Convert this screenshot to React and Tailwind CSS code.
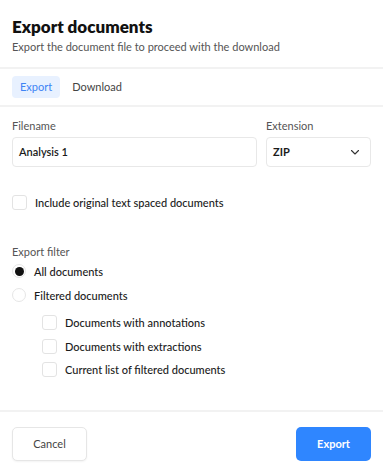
import React from 'react';

const font = { fontFamily: 'Lato, "Open Sans", sans-serif' };

const Box = () => (
  <span className="w-[15px] h-[15px] rounded-[3px] border border-[#e3e3e3] bg-white shrink-0" />
);

const Check = ({ label, className = '' }) => (
  <label className={`flex items-center gap-[8px] h-[15px] ${className}`}>
    <Box />
    <span className="text-[11px] leading-[15px] text-[#1b1b1b] font-medium">{label}</span>
  </label>
);

const Radio = ({ label, checked }) => (
  <label className="flex items-center gap-[8px] h-[24px]">
    <span className="w-[14px] h-[14px] rounded-full border border-[#e6e6e6] bg-white flex items-center justify-center shrink-0">
      {checked && <span className="w-[9px] h-[9px] rounded-full bg-[#111]" />}
    </span>
    <span className="text-[11px] leading-[15px] text-[#1b1b1b] font-medium">{label}</span>
  </label>
);

export default function App() {
  return (
    <div style={font} className="w-[383px] h-[473px] bg-white flex flex-col overflow-hidden">
      {/* header */}
      <div className="px-[12px] pt-[16px] h-[67px]">
        <h1 className="text-[17px] leading-[22px] font-extrabold text-[#111]">Export documents</h1>
        <p className="text-[11px] leading-[14px] mt-[2px] text-[#555]">
          Export the document file to proceed with the download
        </p>
      </div>
      <div className="h-[2px] bg-[#f2f2f2]" />

      {/* tabs */}
      <div className="flex items-center gap-[4px] px-[12px] pt-[7px] pb-[7px]">
        <span className="h-[22px] px-[8px] rounded-[4px] bg-[#e8f1ff] text-[#3d84f5] text-[11px] flex items-center">Export</span>
        <span className="h-[22px] px-[8px] text-[#444] text-[11px] flex items-center">Download</span>
      </div>
      <div className="h-[2px] bg-[#f2f2f2]" />

      {/* body */}
      <div className="px-[12px] pt-[12px] flex-1">
        <div className="flex gap-[9px]">
          <div className="flex-1">
            <div className="text-[11px] text-[#555] h-[14px] leading-[14px] mb-[4px]">Filename</div>
            <div className="h-[30px] rounded-[4px] border border-[#e8e8e8] px-[6px] flex items-center text-[11px] text-[#1b1b1b] font-semibold">
              Analysis 1
            </div>
          </div>
          <div className="w-[105px]">
            <div className="text-[11px] text-[#555] h-[14px] leading-[14px] mb-[4px]">Extension</div>
            <div className="h-[30px] rounded-[4px] border border-[#e8e8e8] pl-[6px] pr-[9px] flex items-center justify-between text-[11px] text-[#1b1b1b] font-bold">
              ZIP
              <svg width="12" height="12" viewBox="0 0 24 24" fill="none" stroke="#333" strokeWidth="2.2" strokeLinecap="round" strokeLinejoin="round">
                <path d="M5 9l7 7 7-7" />
              </svg>
            </div>
          </div>
        </div>

        <Check label="Include original text spaced documents" className="mt-[28px]" />

        <div className="text-[11px] text-[#555] mt-[35px] leading-[14px]">Export filter</div>
        <div>
          <Radio label="All documents" checked />
          <Radio label="Filtered documents" />
        </div>
        <div className="pl-[30px] mt-[8px] flex flex-col gap-[8.5px]">
          <Check label="Documents with annotations" />
          <Check label="Documents with extractions" />
          <Check label="Current list of filtered documents" />
        </div>
      </div>

      {/* footer */}
      <div className="h-[2px] bg-[#f2f2f2]" />
      <div className="flex justify-between items-center px-[12px] pt-[15px] pb-[12px]">
        <button className="w-[75px] h-[34px] rounded-[5px] border border-[#e6e6e6] text-[11px] text-[#444] bg-white shadow-[0_1px_2px_rgba(0,0,0,0.05)]">
          Cancel
        </button>
        <button className="w-[75px] h-[34px] rounded-[5px] bg-[#2f86ff] text-white text-[11px] font-bold">
          Export
        </button>
      </div>
    </div>
  );
}
